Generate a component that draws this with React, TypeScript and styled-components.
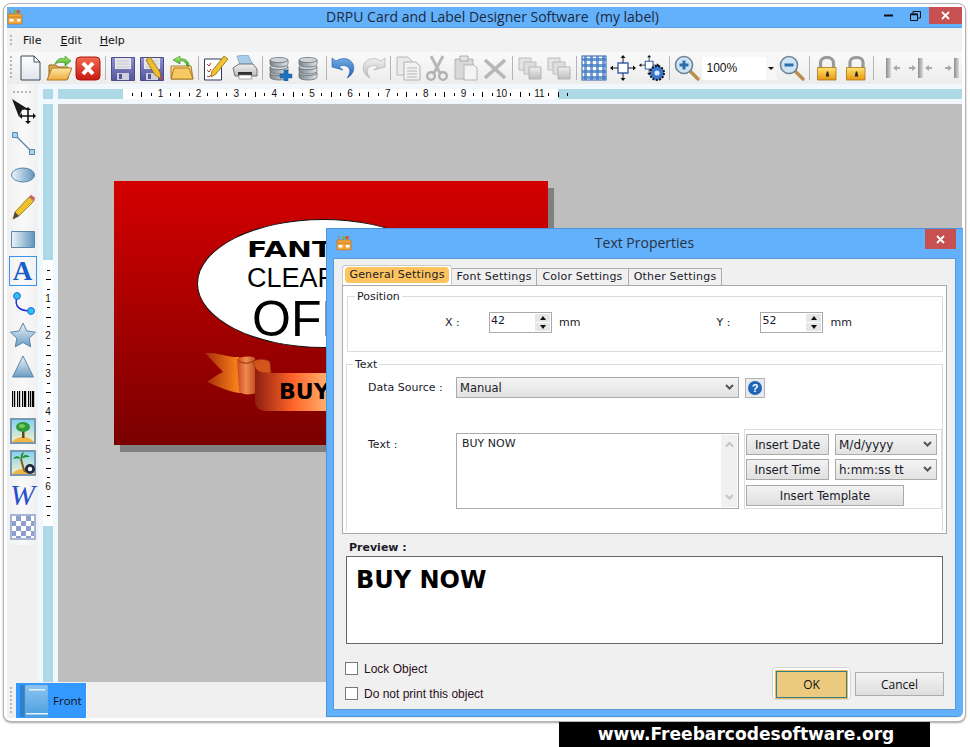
import React from 'react';
import styled, { createGlobalStyle } from 'styled-components';

const GlobalStyle = createGlobalStyle`
    html, body {
        margin: 0;
        padding: 0;
        background: #fff;
    }
    body {
        width: 970px;
        height: 747px;
        overflow: hidden;
        font-family: "DejaVu Sans", sans-serif;
    }
`;

const Page = styled.div`
    width: 970px;
    height: 747px;
    padding: 3px 0 0 3px;
    box-sizing: border-box;
`;

const Win = styled.div`
    width: 963px;
    height: 719px;
    box-sizing: border-box;
    padding: 3px 3px 2px 3px;
    background: #fff;
    border: 1px solid #b4b4b4;
    border-radius: 8px 8px 8px 8px;
    box-shadow: 0 1px 2px rgba(0,0,0,.35);
`;

const Frame = styled.div`
    position: relative;
    height: 711px;
    display: flex;
    flex-direction: column;
    background: #f0f0f0;
`;

const TitleBar = styled.div`
    height: 20px;
    flex: none;
    display: flex;
    align-items: flex-start;
    justify-content: center;
    padding-left: 16px;
    background: #63b0fb;
    border-bottom: 1px solid #5a9fe2;
    color: #1c2a3a;
    font: 14px/19px "Open Sans", sans-serif;
    white-space: pre;
    position: relative;
`;

const AppIconSlot = styled.span`
    position: absolute;
    left: ${p => p.$left}px;
    top: ${p => p.$top}px;
    line-height: 0;
`;

const WinButtons = styled.div`
    position: absolute;
    right: 0;
    top: 0;
    display: flex;
    align-items: flex-start;
`;

const WinGlyph = styled.span`
    width: ${p => p.$w}px;
    height: 17px;
    display: flex;
    align-items: center;
    justify-content: center;
    line-height: 0;
`;

const CloseButton = styled.span`
    width: ${p => p.$w}px;
    height: ${p => p.$h}px;
    display: flex;
    align-items: center;
    justify-content: center;
    background: #c75050;
    line-height: 0;
`;

const MenuBar = styled.div`
    height: 24px;
    flex: none;
    display: flex;
    align-items: center;
    padding-left: 3px;
    background: #f2f2f2;
    font-size: 11px;
    color: #111;
`;

const Grip = styled.span`
    width: 2px;
    height: ${p => p.$h}px;
    flex: none;
    background: repeating-linear-gradient(to bottom, #b8b8b8 0 2px, transparent 2px 4px);
`;

const MenuItem = styled.span`
    margin-left: ${p => p.$gap}px;
    padding-top: 1px;
`;

const ToolBar = styled.div`
    height: 32px;
    flex: none;
    display: flex;
    align-items: center;
    padding-left: 3px;
    background: linear-gradient(to bottom, #fafafa, #ececec);
    overflow: hidden;
`;

const ToolGroup = styled.div`
    display: flex;
    align-items: center;
    margin-left: 3.5px;
`;

const ToolSep = styled.span`
    width: 1px;
    height: 24px;
    margin: 0 3px 0 2px;
    background: #b5b5b5;
    flex: none;
`;

const IconButton = styled.span`
    width: 29px;
    height: 28px;
    flex: none;
    display: flex;
    align-items: center;
    justify-content: center;
    line-height: 0;
`;

const Combo = styled.span`
    width: 76px;
    height: 23px;
    flex: none;
    display: flex;
    align-items: center;
    justify-content: space-between;
    background: #fff;
    font: 12px "Liberation Sans", sans-serif;
    color: #111;
    padding-left: 5px;
    box-sizing: border-box;
`;

const ComboArrow = styled.span`
    width: 11px;
    height: 23px;
    display: flex;
    align-items: center;
    justify-content: center;
    background: #f6f6f6;
    border-right: 1px solid #eee;

    &::after {
        content: "";
        border-left: 3px solid transparent;
        border-right: 3px solid transparent;
        border-top: 3px solid #111;
    }
`;

const Workspace = styled.div`
    flex: 1;
    min-height: 0;
    display: flex;
`;

const ToolColumn = styled.div`
    width: 31px;
    flex: none;
    background: #f0f0f0;
`;

const ToolBox = styled.div`
    height: 461px;
    padding-top: 7px;
    box-sizing: border-box;
    display: flex;
    flex-direction: column;
    align-items: center;
    background: linear-gradient(to right, #f0f0f0, #f9f9f9 50%, #f0f0f0);
`;

const ToolGrip = styled.span`
    width: 19px;
    height: 2px;
    flex: none;
    margin-bottom: 2px;
    background: repeating-linear-gradient(to right, #b8b8b8 0 2px, transparent 2px 4px);
`;

const ToolSlot = styled.span`
    width: 28px;
    height: ${p => p.$h || 32}px;
    box-sizing: border-box;
    flex: none;
    display: flex;
    align-items: center;
    justify-content: center;
    line-height: 0;
    margin: ${p => (p.$active ? '1px 0' : '0')};
    border: 1px solid ${p => (p.$active ? '#3a94ee' : 'transparent')};
`;

const GlyphA = styled.span`
    font: bold 27px/27px "Liberation Serif", serif;
    color: #1a5cc8;
`;

const GlyphW = styled.span`
    font: italic 30px/30px "Liberation Serif", serif;
    color: #2a50cc;
`;

const RulerArea = styled.div`
    flex: 1;
    min-width: 0;
    display: flex;
    flex-direction: column;
    background: #f0f7fd;
`;

const HRulerRow = styled.div`
    height: 20px;
    flex: none;
    padding: 5px 0 5px 5px;
    box-sizing: border-box;
    display: flex;
`;

const Band = styled.span`
    width: ${p => p.$w}px;
    flex: ${p => (p.$w ? 'none' : 1)};
    margin-right: ${p => p.$gap || 0}px;
    background: #add8e6;
`;

const HRulerScale = styled.div`
    position: relative;
    z-index: 1;
    width: 435px;
    flex: none;
    display: flex;
    padding-left: 4.5px;
    box-sizing: border-box;
    background: #fff;
`;

const VRulerCol = styled.div`
    width: 10px;
    flex: none;
    margin: 0 5px;
    display: flex;
    flex-direction: column;
`;

const VRulerBand = styled.div`
    width: 10px;
    flex: ${p => (p.$h ? 'none' : 1)};
    height: ${p => (p.$h ? `${p.$h}px` : 'auto')};
    background: #add8e6;
`;

const VRulerScale = styled.div`
    width: 10px;
    height: 266px;
    flex: none;
    box-sizing: border-box;
    padding-top: 5.5px;
    background: #fff;
    display: flex;
    flex-direction: column;
`;

const HSlot = styled.span`
    width: 9.48px;
    flex: none;
    display: flex;
    align-items: center;
    justify-content: center;
    font: 10px/10px "Liberation Sans", sans-serif;
    color: #111;
`;

const VSlot = styled.span`
    height: 9.45px;
    flex: none;
    display: flex;
    align-items: center;
    justify-content: center;
    font: 10px/10px "Liberation Sans", sans-serif;
    color: #111;
`;

const HTick = styled.i`
    width: 1px;
    height: ${p => (p.$long ? 5 : 3)}px;
    background: #000;
`;

const VTick = styled.i`
    height: 1px;
    width: ${p => (p.$long ? 5 : 3)}px;
    background: #000;
`;

const CanvasRow = styled.div`
    flex: 1;
    min-height: 0;
    display: flex;
`;

const Canvas = styled.div`
    position: relative;
    flex: 1;
    background: #bebebe;
    overflow: hidden;
`;

const Label = styled.div`
    position: absolute;
    left: 56px;
    top: 77px;
    width: 434px;
    height: 264px;
    background: linear-gradient(to bottom, #d40000, #7a0000);
    box-shadow: 6px 7px 0 #808080;
    overflow: hidden;
`;

const LabelEllipse = styled.div`
    position: absolute;
    left: 83px;
    top: 38px;
    width: 253px;
    height: 129px;
    box-sizing: border-box;
    border-radius: 50%;
    background: #fff;
    border: 1px solid #111;
`;

const LabelText = styled.span`
    position: absolute;
    left: ${p => p.$left}px;
    top: ${p => p.$top}px;
    font: ${p => p.$font};
    color: #000;
    white-space: nowrap;
    transform-origin: left top;
    transform: ${p => (p.$stretch ? `scaleX(${p.$stretch})` : 'none')};
`;

const RibbonSlot = styled.span`
    position: absolute;
    left: 91px;
    top: 172px;
    line-height: 0;
`;

const StatusBar = styled.div`
    height: 36px;
    flex: none;
    display: flex;
    align-items: center;
    padding-left: 3px;
    background: #f0f0f0;
`;

const FrontTab = styled.div`
    width: 71px;
    height: 35px;
    margin: 1px 0 0 4px;
    display: flex;
    align-items: center;
    gap: 5px;
    padding-left: 4px;
    box-sizing: border-box;
    background: #3399ff;
    border-right: 1px solid #fff;
    font: 11.5px "Open Sans", sans-serif;
    color: #111;
    line-height: 0;
`;

const Dialog = styled.div`
    position: absolute;
    left: 319px;
    top: 221px;
    width: 637px;
    height: 489px;
    box-sizing: border-box;
    display: flex;
    flex-direction: column;
    background: #63b0fb;
    border: 1px solid #4f93d8;
    border-right: none;
    border-radius: 0 0 6px 0;
    padding: 0 7px 6px 6px;
    z-index: 2;
`;

const DialogTitle = styled.div`
    height: 29px;
    flex: none;
    position: relative;
    display: flex;
    justify-content: center;
    padding-top: 4px;
    box-sizing: border-box;
    font: 14px/19px "Open Sans", sans-serif;
    color: #26323f;
`;

const DialogBody = styled.div`
    flex: 1;
    min-height: 0;
    display: flex;
    flex-direction: column;
    background: #f0f0f0;
    border: 1px solid #5a9ad8;
    font-size: 11px;
    color: #1a1a2a;
    padding: 6px 7px 0 8px;
`;

const Tabs = styled.div`
    height: 20px;
    flex: none;
    display: flex;
    align-items: flex-end;
    letter-spacing: .2px;
`;

const ActiveTab = styled.div`
    width: 110px;
    height: 20px;
    box-sizing: border-box;
    padding: 1px 2px 2px;
    background: #fff;
    border: 1px solid #c8c8c8;
    border-bottom: none;
    border-radius: 4px 4px 0 0;

    span {
        display: block;
        height: 100%;
        line-height: 16px;
        text-align: center;
        background: #fdc35e;
        border-radius: 4px;
    }
`;

const Tab = styled.div`
    width: ${p => p.$w}px;
    height: 17px;
    box-sizing: border-box;
    line-height: 15px;
    text-align: center;
    background: #f0f0f0;
    border: 1px solid #aaa;
    border-left: none;
    border-bottom: none;
`;

const TabPanel = styled.div`
    height: 249px;
    width: 605px;
    flex: none;
    box-sizing: border-box;
    background: #fff;
    border: 1px solid #aaa;
    padding: 4px 3px 0 4px;
    display: flex;
    flex-direction: column;
`;

const Group = styled.fieldset`
    margin: ${p => p.$top || 0}px 0 0 ${p => p.$left || 0}px;
    padding: 0;
    height: ${p => p.$h}px;
    flex: none;
    box-sizing: border-box;
    min-width: 0;
    border: 1px solid #dcdcdc;
    border-bottom: ${p => (p.$open ? 'none' : '1px solid #dcdcdc')};
    display: flex;
    flex-direction: column;
`;

const Legend = styled.legend`
    margin-left: ${p => p.$left}px;
    padding: 0 2px;
    font-size: 11px;
    line-height: 13px;
`;

const PositionRow = styled.div`
    display: flex;
    align-items: center;
    padding: 9px 0 0 97px;
`;

const Caption = styled.span`
    width: ${p => p.$w}px;
    flex: none;
`;

const Spin = styled.span`
    width: 63px;
    height: 21px;
    flex: none;
    box-sizing: border-box;
    display: flex;
    justify-content: space-between;
    border: 1px solid #aaa;
    background: #fff;
    line-height: 16px;
    padding: 0 1px 0 1px;
`;

const SpinButtons = styled.span`
    width: 15px;
    display: flex;
    flex-direction: column;
    gap: 1px;
    margin: 1px 0;
`;

const SpinBtn = styled.span`
    flex: 1;
    display: flex;
    align-items: center;
    justify-content: center;
    background: #e6e6e6;

    &::after {
        content: "";
        border-left: 3px solid transparent;
        border-right: 3px solid transparent;
        ${p => (p.$up ? 'border-bottom: 4px solid #111;' : 'border-top: 4px solid #111;')}
    }
`;

const Unit = styled.span`
    margin: 0 ${p => p.$right}px 0 7px;
    flex: none;
`;

const SourceRow = styled.div`
    display: flex;
    align-items: center;
    padding: 6px 0 0 21px;
`;

const SelectBox = styled.span`
    width: ${p => p.$w}px;
    height: ${p => p.$h || 21}px;
    flex: none;
    box-sizing: border-box;
    display: flex;
    align-items: center;
    justify-content: space-between;
    padding: 0 4px 0 3px;
    border: 1px solid #aaa;
    background: linear-gradient(to bottom, #f4f4f4, #e2e2e2);
    line-height: 0;
`;

const SelectText = styled.span`
    line-height: 14px;
    font-size: ${p => p.$size || 11}px;
`;

const HelpButton = styled.span`
    width: 20px;
    height: 20px;
    margin-left: 6px;
    box-sizing: border-box;
    display: flex;
    align-items: center;
    justify-content: center;
    border: 1px solid #b4b4b4;
    background: #eaeaea;
    line-height: 0;
`;

const TextRow = styled.div`
    display: flex;
    align-items: flex-start;
    padding: 31px 0 0 21px;
`;

const TextCaption = styled.span`
    width: 88px;
    flex: none;
    padding-top: 9px;
`;

const TextArea = styled.div`
    width: 283px;
    height: 76px;
    margin-top: 4px;
    flex: none;
    box-sizing: border-box;
    display: flex;
    justify-content: space-between;
    border: 1px solid #aaa;
    background: #fff;
    padding: 3px 1px 1px 5px;
`;

const TextScroll = styled.span`
    width: 16px;
    margin-top: -2px;
    display: flex;
    flex-direction: column;
    justify-content: space-between;
    align-items: center;
    background: #f0f0f0;
    padding: 6px 0;
    line-height: 0;
`;

const InsertPanel = styled.div`
    width: 198px;
    height: 80px;
    margin-left: 5px;
    flex: none;
    box-sizing: border-box;
    border: 1px solid #dcdcdc;
    padding: 4px 0 0 1px;
    display: grid;
    grid-template-columns: 83px 102px;
    grid-auto-rows: 21px;
    column-gap: 6px;
    row-gap: 4px;
`;

const FlatButton = styled.span`
    box-sizing: border-box;
    width: ${p => p.$w}px;
    height: ${p => p.$h || 21}px;
    display: flex;
    align-items: center;
    justify-content: center;
    border: 1px solid #aaa;
    background: linear-gradient(to bottom, #f2f2f2, #e0e0e0);
    font-size: 11.7px;
    grid-column: ${p => (p.$wide ? '1 / 3' : 'auto')};
    margin-top: ${p => (p.$wide ? 1 : 0)}px;
`;

const PreviewLabel = styled.div`
    margin: 7px 0 0 7px;
    height: 14px;
    font-weight: bold;
    line-height: 14px;
    flex: none;
`;

const PreviewBox = styled.div`
    width: 597px;
    height: 88px;
    margin: 1px 0 0 4px;
    flex: none;
    box-sizing: border-box;
    background: #fff;
    border: 1px solid #666;
    padding: 9px 0 0 9px;
    font: bold 24px/28px "DejaVu Sans", sans-serif;
    color: #000;
`;

const DialogFooter = styled.div`
    flex: 1;
    display: flex;
    justify-content: space-between;
    padding: 18px 4px 0 3px;
`;

const Checks = styled.div`
    display: flex;
    flex-direction: column;
    gap: 12px;
`;

const CheckRow = styled.label`
    display: flex;
    align-items: center;
    gap: 6px;
    height: 13px;
    font: 12px "Liberation Sans", sans-serif;
    color: #2a1020;
`;

const CheckBox = styled.span`
    width: 13px;
    height: 13px;
    box-sizing: border-box;
    background: #fff;
    border: 1px solid #777;
`;

const FooterButtons = styled.div`
    display: flex;
    align-items: flex-start;
    gap: 4px;
    padding-top: 10px;
`;

const OkHalo = styled.span`
    width: 79px;
    height: 33px;
    box-sizing: border-box;
    padding: 3px;
    background: #fff;
    border: 1px solid #d6d6d6;
    border-radius: 4px;
    margin-top: -5px;
`;

const OkButton = styled.span`
    height: 100%;
    display: flex;
    align-items: center;
    justify-content: center;
    background: #ebc97f;
    border: 1px solid #2f8285;
    outline: 1px solid #f2b65c;
    font: 12px "Open Sans", sans-serif;
    color: #111;
`;

const CancelButton = styled.span`
    width: 89px;
    height: 24px;
    display: flex;
    align-items: center;
    justify-content: center;
    box-sizing: border-box;
    border: 1px solid #acacac;
    background: linear-gradient(to bottom, #f3f3f3, #dedede);
    font: 12px "Open Sans", sans-serif;
    color: #111;
`;

const Footer = styled.div`
    width: 371px;
    height: 25px;
    margin-left: 556px;
    background: #000;
    color: #fff;
    text-align: center;
    font: bold 17.1px/24px "DejaVu Sans", sans-serif;
    white-space: nowrap;
    padding-left: 3px;
    box-sizing: border-box;
`;

const DefsSvg = styled.svg`
    display: block;
    width: 0;
    height: 0;
`;

const grad = (id: string, a: string, b: string, horizontal = false) => (
    <linearGradient id={id} x1="0" y1="0" x2={horizontal ? 1 : 0} y2={horizontal ? 0 : 1}>
        <stop offset="0" stopColor={a} />
        <stop offset="1" stopColor={b} />
    </linearGradient>
);

const SharedDefs = () => (
    <DefsSvg aria-hidden="true">
        <defs>
            {grad('gPaper', '#ffffff', '#dfe4ea')}
            {grad('gYellow', '#ffe9a4', '#f0a93f')}
            {grad('gGreen', '#b6f27a', '#35a51f')}
            {grad('gRed', '#f46a4e', '#c41a10')}
            {grad('gPurple', '#8e90cf', '#54569c')}
            {grad('gDb', '#7d868c', '#dfe3e6', true)}
            {grad('gBlue', '#74ade6', '#1c63b5')}
            {grad('gGray', '#f0f0f0', '#bdbdbd')}
            {grad('gLock', '#ffe46e', '#e99610')}
            {grad('gShape', '#eef5fa', '#5f94bc', true)}
            {grad('gShapeV', '#eef5fa', '#6a9cc2')}
            {grad('gSky', '#7fd2f4', '#fff2c4')}
            {grad('gFlag', '#a52a0a', '#ff8a1c', true)}
            {grad('gBook', '#8cc6f2', '#4a9ee0')}
            {grad('gMetal', '#8c8c8c', '#dcdcdc', true)}
            <linearGradient id="gFold" x1="0" y1="0" x2="1" y2="0">
                <stop offset="0" stopColor="#c8481a" />
                <stop offset=".45" stopColor="#f08a50" />
                <stop offset="1" stopColor="#b8431a" />
            </linearGradient>
            <linearGradient id="gBand" gradientUnits="userSpaceOnUse" x1="50" y1="0" x2="240" y2="0">
                <stop offset="0" stopColor="#8f1f0e" />
                <stop offset=".2" stopColor="#ff6428" />
                <stop offset=".4" stopColor="#ffb878" />
                <stop offset="1" stopColor="#ffc487" />
            </linearGradient>
        </defs>
    </DefsSvg>
);

const Ico = ({ children, size = 26, h }: { children: React.ReactNode; size?: number; h?: number }) => (
    <svg width={size} height={h || size} viewBox={`0 0 ${size} ${h || size}`}>
        {children}
    </svg>
);

const Floppy = () => (
    <>
        <path d="M1.500 2.500h23v23h-23z" fill="url(#gPurple)" stroke="#4a4c8c" />
        <path d="M5 3h16v11H5z" fill="#e6e6ea" />
        <path d="M7 6h12M7 9h12M7 12h12" stroke="#c4c4cc" />
        <path d="M7 18h12v7H7z" fill="#cfd0dc" />
        <path d="M9 19h3v5H9z" fill="#54569c" />
    </>
);

const Cylinder = ({ y }: { y: number }) => (
    <>
        <path d={`M3 ${y + 3}v4c0 4 18 4 18 0v-4z`} fill="url(#gDb)" stroke="#5c666c" strokeWidth=".7" />
        <ellipse cx="12" cy={y + 3} rx="9" ry="2.600" fill="#cdd3d7" stroke="#5c666c" strokeWidth=".7" />
    </>
);

const Db = ({ plus }: { plus?: boolean }) => (
    <Ico>
        <Cylinder y={15} />
        <Cylinder y={9} />
        <Cylinder y={2} />
        {plus && <path d="M17 15h4v4h4v4h-4v3h-4v-3h-4v-4h4z" fill="#1f72bc" stroke="#155a98" strokeWidth=".5" />}
    </Ico>
);

const Magnifier = ({ plus }: { plus?: boolean }) => (
    <Ico>
        <path d="M15 15l9 9" stroke="#b98d4a" strokeWidth="3.400" strokeLinecap="round" />
        <circle cx="10" cy="10" r="8.500" fill="#cfe4f4" stroke="#6f8494" strokeWidth="1.600" />
        <path d="M5.500 10h9" stroke="#2a6fae" strokeWidth="3" />
        {plus && <path d="M10 5.500v9" stroke="#2a6fae" strokeWidth="3" />}
    </Ico>
);

const Lock = ({ open }: { open?: boolean }) => (
    <Ico>
        <path
            d={open ? 'M7 12V7c0-6 13-6 13 0v6' : 'M6.500 13V8c0-7.500 13-7.500 13 0v5'}
            fill="none"
            stroke="#9a9a9a"
            strokeWidth="3.200"
        />
        <path d="M3.500 12.500h18.500v12.500h-18.500z" fill="url(#gLock)" stroke="#a8741a" strokeWidth=".8" />
        <path d="M12.800 16.500h1.400l1 5h-3.400z" fill="#222" />
    </Ico>
);

const CopyShapes = () => (
    <Ico>
        <path d="M2 2h11l4 4v14H2z" fill="#eaeaea" stroke="#b8b8b8" />
        <path d="M9 7h12l4 4v14H9z" fill="#f2f2f2" stroke="#b0b0b0" />
        <path d="M12 13h10M12 16h10M12 19h10M12 22h10" stroke="#b4b4b4" />
    </Ico>
);

const Stacked = () => (
    <Ico>
        <path d="M2 3h12v12H2z" fill="#e4e4e4" stroke="#bcbcbc" />
        <path d="M7 7h12v12H7z" fill="#dedede" stroke="#bcbcbc" />
        <path d="M12 12h12v12H12z" fill="url(#gGray)" stroke="#b4b4b4" />
    </Ico>
);

const MoveBox = ({ small }: { small?: boolean }) => (
    <g transform={small ? 'scale(.78)' : undefined}>
        <path d="M8 8h10v10H8z" fill="#fff" stroke="#3a62ae" strokeWidth="1.400" />
        <path d="M13 8V1M13 18v7M8 13H1M18 13h7" stroke="#222" />
        <path d="M13 0l-2.500 3h5zM13 26l-2.500-3h5zM0 13l3-2.500v5zM26 13l-3-2.500v5z" fill="#111" />
    </g>
);

const AlignBar = ({ x }: { x: number }) => <path d={`M${x} 3h5v20h-5z`} fill="url(#gMetal)" />;

const icons: Record<string, React.ReactNode> = {
    new: (
        <Ico>
            <path d="M4 1h13l6 6v18H4z" fill="url(#gPaper)" stroke="#3c4a5c" />
            <path d="M17 1v6h6z" fill="#fff" stroke="#3c4a5c" />
        </Ico>
    ),
    open: (
        <Ico>
            <path d="M3 24V10h7l2 2h10v12z" fill="#e6ab4b" stroke="#8c6420" />
            <path d="M1 25l5-12h20l-5 12z" fill="url(#gYellow)" stroke="#a87a28" />
            <path d="M9 9c2-5 6-7 10-5V1l6 5-6 5V8c-3-1-7-1-10 1z" fill="url(#gGreen)" stroke="#2b8a1c" strokeWidth=".6" />
        </Ico>
    ),
    close: (
        <Ico>
            <rect x="1" y="2" width="24" height="23" rx="4" fill="url(#gRed)" stroke="#a8160e" />
            <path d="M8 8l10 11M18 8L8 19" stroke="#fff" strokeWidth="4" />
        </Ico>
    ),
    save: (
        <Ico>
            <Floppy />
        </Ico>
    ),
    saveAs: (
        <Ico>
            <Floppy />
            <path d="M11 2l-4 3 9 15 6 4-1-7z" fill="#eebc2c" stroke="#7c6010" strokeWidth=".7" />
            <path d="M21 22l3 2" stroke="#d44" strokeWidth="1.500" />
        </Ico>
    ),
    openBack: (
        <Ico>
            <path d="M3 24V11h20l2 13z" fill="url(#gYellow)" stroke="#a87a28" />
            <path d="M6 13h15l4 11H3z" fill="#f8c862" stroke="#a87a28" />
            <path d="M19 11c-1-4-4-6-7-5V9L5 5l7-4v3c5-1 9 2 9 7z" fill="url(#gGreen)" stroke="#2b8a1c" strokeWidth=".6" />
        </Ico>
    ),
    edit: (
        <Ico>
            <path d="M1.500 4h17v21h-17z" fill="#fff" stroke="#2a3a5c" />
            <path d="M4 9l2 2 2-3M4 15l2 2 2-3M4 21l2 1 2-2" stroke="#c0392b" fill="none" />
            <path d="M21 1l4 3-12 15-5 3 1-6z" fill="#f2c230" stroke="#7a5e10" strokeWidth=".7" />
        </Ico>
    ),
    print: (
        <Ico>
            <path d="M5 1l11-1 5 10H8z" fill="#a8cdea" stroke="#6d8ea8" strokeWidth=".6" />
            <path d="M1 13l6-4h14l4 5v7H3z" fill="url(#gGray)" stroke="#555" strokeWidth=".8" />
            <path d="M6 17h14v3H6z" fill="#333" />
            <path d="M7 20h12l1 4H7z" fill="#fff" stroke="#777" strokeWidth=".6" />
        </Ico>
    ),
    dbAdd: <Db plus />,
    db: <Db />,
    undo: (
        <Ico>
            <path d="M1 12V3l4 3c6-4 14-3 17 3 2 5 0 11-6 14 3-4 4-8 1-11-3-2-7-2-9 0l4 3z" fill="url(#gBlue)" stroke="#1c5aa8" strokeWidth=".6" />
        </Ico>
    ),
    redo: (
        <Ico>
            <path d="M25 12V3l-4 3C15 2 7 3 4 9c-2 5 0 11 6 14-3-4-4-8-1-11 3-2 7-2 9 0l-4 3z" fill="url(#gGray)" stroke="#aaa" strokeWidth=".6" />
        </Ico>
    ),
    copy: <CopyShapes />,
    cut: (
        <Ico>
            <path d="M7 1l9 17M19 1l-9 17" stroke="#b8b8b8" strokeWidth="3" />
            <circle cx="7" cy="21" r="3.800" fill="none" stroke="#b0b0b0" strokeWidth="2.400" />
            <circle cx="19" cy="21" r="3.800" fill="none" stroke="#b0b0b0" strokeWidth="2.400" />
        </Ico>
    ),
    paste: (
        <Ico>
            <path d="M2 4h18v20H2z" fill="#d8d8d8" stroke="#b4b4b4" />
            <path d="M7 1h8v5H7z" fill="#e4e4e4" stroke="#aaa" />
            <path d="M11 10h10l3 3v12H11z" fill="#f4f4f4" stroke="#b4b4b4" />
        </Ico>
    ),
    del: (
        <Ico>
            <path d="M3 5l20 18M23 5L3 23" stroke="#b6b6b6" strokeWidth="3.600" />
        </Ico>
    ),
    group: <Stacked />,
    ungroup: <Stacked />,
    grid: (
        <Ico>
            <rect x="1" y="1" width="24" height="24" fill="#fff" stroke="#2f5ea8" />
            <path d="M1 4.500h24M1 10.500h24M1 16.500h24M1 22.500h24" stroke="#3f7cc4" strokeWidth="2.800" opacity=".75" />
            <path d="M4.500 1v24M10.500 1v24M16.500 1v24M22.500 1v24" stroke="#3f7cc4" strokeWidth="2.800" opacity=".75" />
        </Ico>
    ),
    move: (
        <Ico>
            <MoveBox />
        </Ico>
    ),
    moveGear: (
        <Ico>
            <MoveBox small />
            <circle cx="18" cy="18" r="7" fill="#3a78d0" stroke="#111" strokeWidth="2" strokeDasharray="2 1.400" />
            <circle cx="18" cy="18" r="2.500" fill="#dfeaf8" />
        </Ico>
    ),
    zoomIn: <Magnifier plus />,
    zoomOut: <Magnifier />,
    lock: <Lock />,
    unlock: <Lock open />,
    alignL: (
        <Ico>
            <AlignBar x={8} />
            <path d="M15 13l4-3v2h3v2h-3v2z" fill="#a8a8a8" />
        </Ico>
    ),
    alignC: (
        <Ico>
            <AlignBar x={11} />
            <path d="M9 13l-4-3v2H2v2h3v2zM18 13l4-3v2h3v2h-3v2z" fill="#a8a8a8" transform="matrix(1 0 0 1 0 0)" />
        </Ico>
    ),
    alignR: (
        <Ico>
            <AlignBar x={18} />
            <path d="M16 13l-4-3v2H9v2h3v2z" fill="#a8a8a8" />
        </Ico>
    ),
};

const toolGroups: string[][] = [
    ['new', 'open', 'close'],
    ['save', 'saveAs', 'openBack'],
    ['edit', 'print'],
    ['dbAdd', 'db'],
    ['undo', 'redo'],
    ['copy', 'cut', 'paste', 'del'],
    ['group', 'ungroup'],
    ['grid', 'move', 'moveGear'],
    ['zoomIn', 'combo', 'zoomOut'],
    ['lock', 'unlock'],
    ['alignL', 'alignC', 'alignR'],
];

const AppIcon = ({ size = 16 }: { size?: number }) => (
    <svg width={size} height={size} viewBox="0 0 16 16">
        <path d="M4 5L2 1M7 5l1-4M11 5l2-4" stroke="#a86" strokeWidth="1.200" />
        <circle cx="8" cy="2.500" r="1.800" fill="#6bbb4a" />
        <circle cx="11" cy="2.500" r="1.600" fill="#d8503a" />
        <path d="M1 5h14v10H1z" fill="#f2a63c" stroke="#b87420" strokeWidth=".6" />
        <path d="M1 8h14" stroke="#c9822a" />
        <path d="M2.500 10h4v2.500h-4zM10 10h3.500v2.500H10z" fill="#fff" />
    </svg>
);

const Palm = () => (
    <>
        <rect x="1" y="1" width="24" height="24" fill="url(#gSky)" stroke="#7b97ad" strokeWidth="2" />
        <path d="M2 24c3-4 8-5 11-5s8 1 11 5z" fill="#efb548" />
    </>
);

const barcodeBars = [0, 2, 5, 7, 10, 12, 13, 16, 18, 20, 21];

const leftTools: { id: string; node: React.ReactNode; active?: boolean; h?: number }[] = [
    {
        id: 'pointer',
        node: (
            <Ico>
                <path d="M2 1l16 10-6 1-3 7z" fill="#1a1a1a" />
                <path d="M18 11v14M11 18h14" stroke="#111" strokeWidth="1.600" />
                <path d="M18 9l-3 3h6zM18 26l-3-3h6zM9 18l3-3v6zM26 18l-3-3v6z" fill="#111" />
            </Ico>
        ),
    },
    {
        id: 'line',
        node: (
            <Ico>
                <path d="M5 5l17 17" stroke="#5c86aa" strokeWidth="1.300" />
                <path d="M2.500 2.500h5v5h-5zM19.500 19.500h5v5h-5z" fill="#9ad8f2" stroke="#5c86aa" />
            </Ico>
        ),
    },
    {
        id: 'ellipse',
        node: (
            <Ico>
                <ellipse cx="13" cy="13" rx="11.500" ry="7" fill="url(#gShape)" stroke="#5c86aa" />
            </Ico>
        ),
    },
    {
        id: 'pencil',
        node: (
            <Ico>
                <path d="M3 25l2-7L19 3l5 4-15 15z" fill="#eec22c" stroke="#7a6414" strokeWidth=".7" />
                <path d="M3 25l2-7 4 4z" fill="#544" />
                <path d="M19 3l2-2 4 3-1 3z" fill="#d45a5a" stroke="#999" strokeWidth=".5" />
            </Ico>
        ),
    },
    {
        id: 'rect',
        node: (
            <Ico>
                <path d="M1.500 5.500h23v16h-23z" fill="url(#gShape)" stroke="#5c86aa" />
            </Ico>
        ),
    },
    { id: 'text', active: true, h: 30, node: <GlyphA>A</GlyphA> },
    {
        id: 'curve',
        node: (
            <Ico>
                <path d="M7 7c-3 9 2 14 14 14" fill="none" stroke="#2230d8" strokeWidth="1.500" />
                <circle cx="7" cy="6" r="3.400" fill="#2ac4f2" stroke="#2a60d8" />
                <circle cx="21" cy="21" r="3.400" fill="#2ac4f2" stroke="#2a60d8" />
            </Ico>
        ),
    },
    {
        id: 'star',
        node: (
            <Ico>
                <path d="M13 1l3.800 8 8.700 1.200-6.300 6 1.500 8.600L13 20.600l-7.700 4.200 1.500-8.600-6.300-6L9.200 9z" fill="url(#gShapeV)" stroke="#5c86aa" />
            </Ico>
        ),
    },
    {
        id: 'triangle',
        node: (
            <Ico>
                <path d="M13 2l10.500 21h-21z" fill="url(#gShapeV)" stroke="#5c86aa" />
            </Ico>
        ),
    },
    {
        id: 'barcode',
        node: (
            <Ico>
                {barcodeBars.map(x => (
                    <rect key={x} x={x + 2} y="5" width="1.200" height="16" fill="#000" />
                ))}
            </Ico>
        ),
    },
    {
        id: 'image',
        node: (
            <Ico>
                <Palm />
                <path d="M12 12h2.500v8H12z" fill="#6a4216" />
                <ellipse cx="13" cy="9" rx="7" ry="5" fill="#2f9a3a" />
                <ellipse cx="12" cy="8" rx="3" ry="2" fill="#7ac85a" />
            </Ico>
        ),
    },
    {
        id: 'image2',
        node: (
            <Ico>
                <Palm />
                <path d="M11 9c1 4 2 9 4 13" stroke="#8a5a1c" strokeWidth="2" fill="none" />
                <path d="M11 9C8 5 5 6 3 9c3-1 5-1 8 0zM11 9c2-5 6-5 9-2-3 0-6 0-9 2zM11 9c-1-3 0-6 3-7-1 3-2 5-3 7z" fill="#1f8a2c" />
                <circle cx="20" cy="19" r="5" fill="#1f2a44" />
                <circle cx="20" cy="19" r="2.200" fill="#fff" />
            </Ico>
        ),
    },
    { id: 'word', node: <GlyphW>W</GlyphW> },
    {
        id: 'checker',
        node: (
            <Ico>
                <rect x="1" y="1" width="24" height="24" fill="#fff" stroke="#7d92c4" strokeWidth="1.300" />
                <path d="M6 2h5v5H6zM16 2h5v5h-5zM2 7h4v5H2zM11 7h5v5h-5zM6 12h5v5H6zM16 12h5v5h-5zM2 17h4v5H2zM11 17h5v5h-5zM21 7h3v5h-3zM21 17h3v5h-3zM6 22h5v2H6zM16 22h5v2h-5z" fill="#8f9fcc" />
            </Ico>
        ),
    },
];

const scaleSlots = (major: number[]) =>
    major.flatMap(n => [
        { key: `${n}a`, kind: 'short' },
        { key: `${n}b`, kind: 'long' },
        { key: `${n}c`, kind: 'short' },
        { key: `${n}d`, kind: 'num', label: n },
    ]);

const hSlots = scaleSlots([1, 2, 3, 4, 5, 6, 7, 8, 9, 10, 11]);
const vSlots = scaleSlots([1, 2, 3, 4, 5, 6]);
const trailing = [
    { key: 'ta', kind: 'short' },
    { key: 'tb', kind: 'long' },
    { key: 'tc', kind: 'short' },
];

const Ribbon = () => (
    <svg width="240" height="62" viewBox="0 0 240 62">
        <path d="M0 0C12-1 24 5 34 4l2 36C26 40 12 33 2 29c6-4 11-8 16-10z" fill="url(#gFlag)" />
        <path d="M32 6c6-3 14-3 18-1l2 35c-6 2-14 2-18-1z" fill="url(#gFold)" />
        <path d="M34 8c5 3 10 3 16-1" stroke="#8a2e0a" fill="none" />
        <path d="M48 9c4-4 14-3 17 0l1 11H52z" fill="#d4551c" stroke="#8a2e0a" strokeWidth=".7" />
        <path d="M50 14c3 5 8 6 14 6h176v38H62c-8 0-12-4-12-10z" fill="url(#gBand)" />
    </svg>
);

const Book = () => (
    <svg width="28" height="34" viewBox="0 0 28 34">
        <rect x="0" y="1" width="28" height="32" rx="2" fill="#2f7fcb" />
        <rect x="5" y="1" width="23" height="32" rx="1" fill="url(#gBook)" stroke="#6aa4d4" strokeWidth=".6" />
        <path d="M9 5h16v1.500H9zM6 29h22v1.500H6z" fill="#e6f3ff" />
    </svg>
);

const Chevron = ({ color = '#555' }: { color?: string }) => (
    <svg width="9" height="7" viewBox="0 0 9 7">
        <path d="M1 1l3.500 3.500L8 1" fill="none" stroke={color} strokeWidth="2" />
    </svg>
);

const ChevronUp = () => (
    <svg width="9" height="7" viewBox="0 0 9 7">
        <path d="M1 5.500L4.500 2 8 5.500" fill="none" stroke="#c4c4c4" strokeWidth="2" />
    </svg>
);

const SpinField = ({ value }: { value: string }) => (
    <Spin>
        <span>{value}</span>
        <SpinButtons>
            <SpinBtn $up />
            <SpinBtn />
        </SpinButtons>
    </Spin>
);

const App = () => {
    return (
        <Page>
            <GlobalStyle />
            <SharedDefs />
            <Win>
                <Frame>
                    <TitleBar>
                        <AppIconSlot $left={0} $top={2}>
                            <AppIcon />
                        </AppIconSlot>
                        {'DRPU Card and Label Designer Software  (my label)'}
                        <WinButtons>
                            <WinGlyph $w={27}>
                                <svg width="9" height="4" viewBox="0 0 9 4">
                                    <path d="M0 1.500h9" stroke="#111" strokeWidth="2" />
                                </svg>
                            </WinGlyph>
                            <WinGlyph $w={27}>
                                <svg width="11" height="10" viewBox="0 0 11 10">
                                    <path d="M.5 3h7v6.500h-7zM3 3V.5h7.500V7H8" fill="none" stroke="#111" />
                                    <path d="M.5 3.500h7" stroke="#111" strokeWidth="1.500" />
                                </svg>
                            </WinGlyph>
                            <CloseButton $w={33} $h={17}>
                                <svg width="9" height="9" viewBox="0 0 9 9">
                                    <path d="M1 1l7 7M8 1L1 8" stroke="#fff" strokeWidth="1.800" />
                                </svg>
                            </CloseButton>
                        </WinButtons>
                    </TitleBar>

                    <MenuBar>
                        <Grip $h={10} />
                        <MenuItem $gap={11}>File</MenuItem>
                        <MenuItem $gap={19}><u>E</u>dit</MenuItem>
                        <MenuItem $gap={18}><u>H</u>elp</MenuItem>
                    </MenuBar>

                    <ToolBar>
                        <Grip $h={24} />
                        <ToolGroup>
                            {toolGroups.map((group, i) => (
                                <React.Fragment key={group[0]}>
                                    {i > 0 && <ToolSep />}
                                    {group.map(id =>
                                        id === 'combo' ? (
                                            <Combo key={id}>
                                                100%
                                                <ComboArrow />
                                            </Combo>
                                        ) : (
                                            <IconButton key={id}>{icons[id]}</IconButton>
                                        )
                                    )}
                                </React.Fragment>
                            ))}
                        </ToolGroup>
                    </ToolBar>

                    <Workspace>
                        <ToolColumn>
                            <ToolBox>
                                <ToolGrip />
                                {leftTools.map(tool => (
                                    <ToolSlot key={tool.id} $active={tool.active} $h={tool.h}>
                                        {tool.node}
                                    </ToolSlot>
                                ))}
                            </ToolBox>
                        </ToolColumn>

                        <RulerArea>
                            <HRulerRow>
                                <Band $w={10} $gap={5} />
                                <Band $w={65} />
                                <HRulerScale>
                                    {[...hSlots, ...trailing].map(s => (
                                        <HSlot key={s.key}>
                                            {s.kind === 'num' ? (s as { label: number }).label : <HTick $long={s.kind === 'long'} />}
                                        </HSlot>
                                    ))}
                                </HRulerScale>
                                <Band />
                            </HRulerRow>

                            <CanvasRow>
                                <VRulerCol>
                                    <VRulerBand $h={156} />
                                    <VRulerScale>
                                        {[...vSlots, ...trailing].map(s => (
                                            <VSlot key={s.key}>
                                                {s.kind === 'num' ? (s as { label: number }).label : <VTick $long={s.kind === 'long'} />}
                                            </VSlot>
                                        ))}
                                    </VRulerScale>
                                    <VRulerBand />
                                </VRulerCol>

                                <Canvas>
                                    <Label>
                                        <LabelEllipse />
                                        <LabelText $left={133} $top={57} $font={'bold 21px/24px "DejaVu Sans", sans-serif'} $stretch={1.42}>FANT</LabelText>
                                        <LabelText $left={133} $top={81} $font={'27px/32px "Liberation Sans", sans-serif'}>CLEAR</LabelText>
                                        <LabelText $left={138} $top={110} $font={'50px/56px "Liberation Sans", sans-serif'}>OFF</LabelText>
                                        <RibbonSlot><Ribbon /></RibbonSlot>
                                        <LabelText $left={165} $top={198} $font={'bold 22px/26px "DejaVu Sans", sans-serif'}>BUY</LabelText>
                                    </Label>
                                </Canvas>
                            </CanvasRow>
                        </RulerArea>
                    </Workspace>

                    <StatusBar>
                        <Grip $h={26} />
                        <FrontTab>
                            <Book />
                            <span>Front</span>
                        </FrontTab>
                    </StatusBar>

                    <Dialog>
                        <DialogTitle>
                            <AppIconSlot $left={3} $top={6}>
                                <AppIcon />
                            </AppIconSlot>
                            Text Properties
                            <AppIconSlot $left={592} $top={0}>
                                <CloseButton $w={31} $h={20}>
                                    <svg width="9" height="9" viewBox="0 0 9 9">
                                        <path d="M1 1l7 7M8 1L1 8" stroke="#fff" strokeWidth="1.800" />
                                    </svg>
                                </CloseButton>
                            </AppIconSlot>
                        </DialogTitle>

                        <DialogBody>
                            <Tabs>
                                <ActiveTab><span>General Settings</span></ActiveTab>
                                <Tab $w={85}>Font Settings</Tab>
                                <Tab $w={92}>Color Settings</Tab>
                                <Tab $w={93}>Other Settings</Tab>
                            </Tabs>

                            <TabPanel>
                                <Group $h={62}>
                                    <Legend $left={7}>Position</Legend>
                                    <PositionRow>
                                        <Caption $w={44}>X :</Caption>
                                        <SpinField value="42" />
                                        <Unit $right={136}>mm</Unit>
                                        <Caption $w={44}>Y :</Caption>
                                        <SpinField value="52" />
                                        <Unit $right={0}>mm</Unit>
                                    </PositionRow>
                                </Group>

                                <Group $h={173} $open $left={-1} $top={6}>
                                    <Legend $left={6}>Text</Legend>
                                    <SourceRow>
                                        <Caption $w={88}>Data Source :</Caption>
                                        <SelectBox $w={283}>
                                            <SelectText $size={11.5}>Manual</SelectText>
                                            <Chevron />
                                        </SelectBox>
                                        <HelpButton>
                                            <svg width="16" height="16" viewBox="0 0 16 16">
                                                <circle cx="8" cy="8" r="7" fill="#1f66b8" />
                                                <text x="8" y="12" textAnchor="middle" fontSize="11" fontWeight="bold" fill="#fff" fontFamily="Liberation Sans">?</text>
                                            </svg>
                                        </HelpButton>
                                    </SourceRow>
                                    <TextRow>
                                        <TextCaption>Text :</TextCaption>
                                        <TextArea>
                                            <span>BUY NOW</span>
                                            <TextScroll>
                                                <ChevronUp />
                                                <Chevron color="#c4c4c4" />
                                            </TextScroll>
                                        </TextArea>
                                        <InsertPanel>
                                            <FlatButton $w={83}>Insert Date</FlatButton>
                                            <SelectBox $w={102}>
                                                <SelectText $size={12}>M/d/yyyy</SelectText>
                                                <Chevron />
                                            </SelectBox>
                                            <FlatButton $w={83}>Insert Time</FlatButton>
                                            <SelectBox $w={102}>
                                                <SelectText $size={12}>h:mm:ss tt</SelectText>
                                                <Chevron />
                                            </SelectBox>
                                            <FlatButton $w={158} $wide>Insert Template</FlatButton>
                                        </InsertPanel>
                                    </TextRow>
                                </Group>
                            </TabPanel>

                            <PreviewLabel>Preview :</PreviewLabel>
                            <PreviewBox>BUY NOW</PreviewBox>

                            <DialogFooter>
                                <Checks>
                                    <CheckRow><CheckBox />Lock Object</CheckRow>
                                    <CheckRow><CheckBox />Do not print this object</CheckRow>
                                </Checks>
                                <FooterButtons>
                                    <OkHalo><OkButton>OK</OkButton></OkHalo>
                                    <CancelButton>Cancel</CancelButton>
                                </FooterButtons>
                            </DialogFooter>
                        </DialogBody>
                    </Dialog>
                </Frame>
            </Win>
            <Footer>www.Freebarcodesoftware.org</Footer>
        </Page>
    );
};

export default App;
